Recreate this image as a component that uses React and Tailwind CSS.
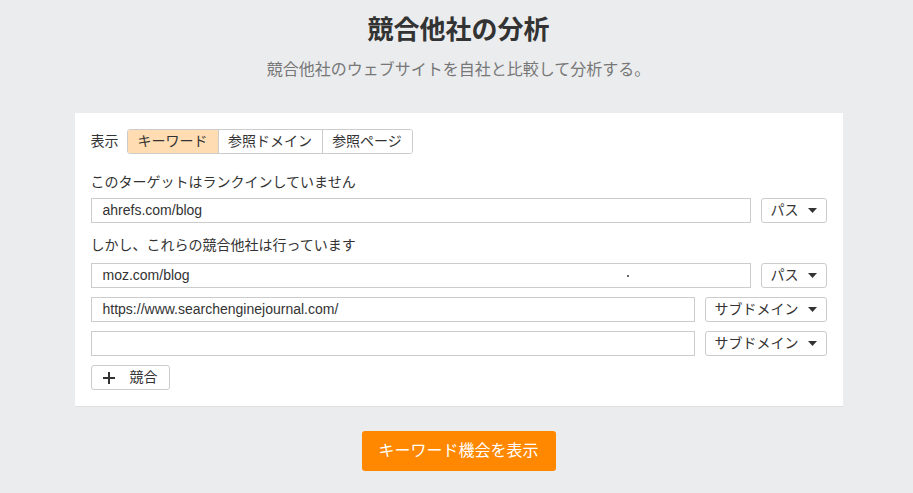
const font = { fontFamily: '"Liberation Sans", "Noto Sans CJK JP", sans-serif' };

function Caret() {
  return (
    <svg width="9" height="5" viewBox="0 0 9 5" className="shrink-0" aria-hidden>
      <path d="M0 0h9L4.5 5z" fill="#333" />
    </svg>
  );
}

function ModeSelect({ label, wide }) {
  return (
    <button
      className={`flex h-[25px] shrink-0 items-center justify-between rounded-[3px] border border-[#cccccc] bg-white pl-[9px] pr-[9px] text-[14px] text-[#333] ${
        wide ? 'w-[122px]' : 'w-[66px]'
      }`}
    >
      <span>{label}</span>
      <Caret />
    </button>
  );
}

function TargetRow({ value, mode, wide, dot }) {
  return (
    <div className="flex items-center gap-[10px]">
      <div className="relative flex h-[25px] flex-1 items-center border border-[#cccccc] bg-white pl-[11px] text-[14px] text-[#333]">
        {value}
        {dot ? <span className="absolute left-[535px] top-[11px] h-[2px] w-[2px] bg-[#666]" /> : null}
      </div>
      <ModeSelect label={mode} wide={wide} />
    </div>
  );
}

const tabs = [
  { label: 'キーワード', w: 'w-[90px]' },
  { label: '参照ドメイン', w: 'w-[104px]' },
  { label: '参照ページ', w: 'w-[90px]' },
];

export default function App() {
  return (
    <div className="min-h-[493px] bg-[#ebecee] pl-[4px]" style={font}>
      <div className="flex flex-col items-center pt-[12px]">
        <h1 className="text-[26px] font-bold leading-[36px] text-[#333]">競合他社の分析</h1>
        <p className="mt-[10px] text-[16px] leading-[24px] text-[#777]">
          競合他社のウェブサイトを自社と比較して分析する。
        </p>

        <div className="mt-[31px] w-[768px] border-b border-[#dedfe1] bg-white px-[16px] pb-[16px] pt-[16px] text-[#333]">
          <div className="flex items-center gap-[8px] text-[14px]">
            <span className="w-[28px]">表示</span>
            <div className="flex h-[25px] overflow-hidden rounded-[3px] border border-[#cccccc]">
              {tabs.map((t, i) => (
                <span
                  key={t.label}
                  className={`flex items-center justify-center ${t.w} ${
                    i === 0 ? 'bg-[#ffdcb1]' : 'border-l border-[#cccccc] bg-white'
                  }`}
                >
                  {t.label}
                </span>
              ))}
            </div>
          </div>

          <p className="mt-[18px] text-[14px] leading-[20px]">このターゲットはランクインしていません</p>
          <div className="mt-[6px]">
            <TargetRow value="ahrefs.com/blog" mode="パス" />
          </div>

          <p className="mt-[12px] text-[14px] leading-[20px]">しかし、これらの競合他社は行っています</p>
          <div className="mt-[8px] flex flex-col gap-[9px]">
            <TargetRow value="moz.com/blog" mode="パス" dot />
            <TargetRow value="https://www.searchenginejournal.com/" mode="サブドメイン" wide />
            <TargetRow value="" mode="サブドメイン" wide />
            <div>
              <button className="flex h-[25px] w-[79px] items-center gap-[15px] rounded-[3px] border border-[#cccccc] bg-white pl-[11px] text-[14px] text-[#333]">
                <svg width="12" height="12" viewBox="0 0 12 12" aria-hidden>
                  <path d="M6 0v12M0 6h12" stroke="#333" strokeWidth="2" />
                </svg>
                <span>競合</span>
              </button>
            </div>
          </div>
        </div>

        <button className="mt-[24px] flex h-[40px] w-[194px] items-center justify-center rounded-[3px] bg-[#ff8800] text-[16px] text-white">
          キーワード機会を表示
        </button>
      </div>
    </div>
  );
}
